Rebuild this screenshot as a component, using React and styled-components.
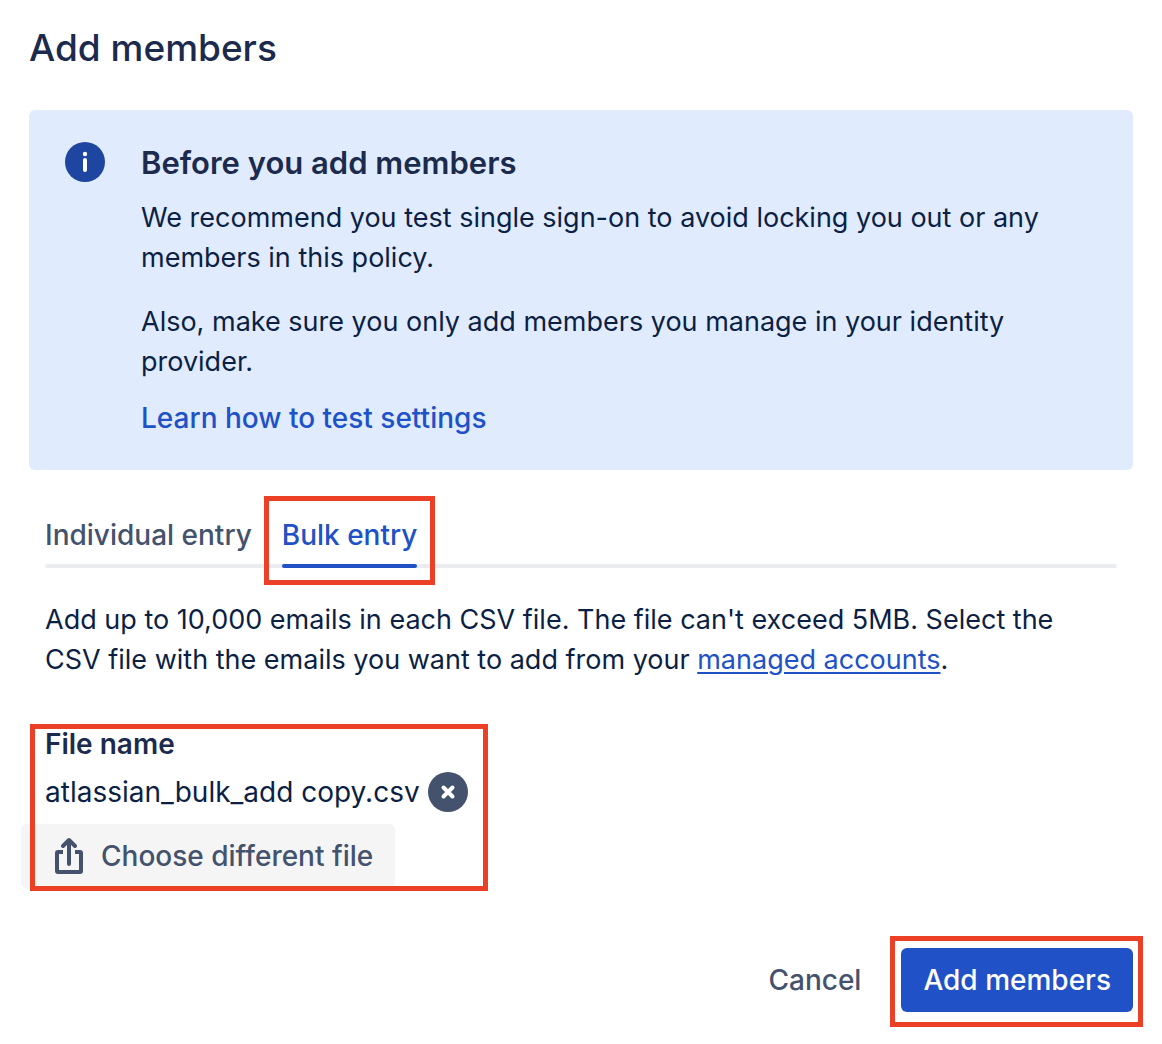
import React, { useState } from "react";
import styled, { createGlobalStyle, css } from "styled-components";

const color = {
  text: "#0c1f44",
  heading: "#1c2b4d",
  subtle: "#44526e",
  blue: "#2151c6",
  info: "#1e46a0",
  panel: "#e0ebfe",
  mark: "#eb4026",
};

const Global = createGlobalStyle`
  *, *::before, *::after { box-sizing: border-box; }
  body { margin: 0; background: #fff; }
  button { font: inherit; border: 0; cursor: pointer; }
  h1, h2, p { margin: 0; }
`;

const Dialog = styled.main`
  padding: 24px 29px 32px;
  font: 400 28px/40px Inter, "Liberation Sans", sans-serif;
  color: ${color.text};
`;

const Title = styled.h1`
  font-size: 37px;
  line-height: 48px;
  font-weight: 500;
  color: ${color.heading};
`;

const Message = styled.section`
  display: flex;
  gap: 36px;
  margin-top: 38px;
  padding: 32px 36px;
  border-radius: 6px;
  background: ${color.panel};
`;

const InfoIcon = styled.svg`
  flex: none;
  width: 40px;
  height: 40px;
`;

const MessageBody = styled.div`
  display: flex;
  flex-direction: column;
  align-items: flex-start;
`;

const MessageTitle = styled.h2`
  margin-bottom: 14px;
  font-size: 31px;
  line-height: 42px;
  font-weight: 600;
  color: ${color.heading};
`;

const Paragraph = styled.p`
  font-size: 27px;
  & + & { margin-top: 24px; }
`;

const Hint = styled(Paragraph)`
  padding-right: 16px;
`;

const Link = styled.a`
  color: ${color.blue};
  text-decoration: underline;
  text-decoration-thickness: 2px;
  text-underline-offset: 3px;
`;

const MessageLink = styled(Link)`
  margin-top: 16px;
  font-weight: 500;
  text-decoration: none;
`;

const Content = styled.div`
  padding: 0 16px;
`;

const Tabs = styled.div`
  position: relative;
  display: flex;
  gap: 30px;
  margin: 40px 0 32px;
  &::before {
    content: "";
    position: absolute;
    inset: auto 0 0;
    height: 4px;
    border-radius: 2px;
    background: #ebecf0;
  }
`;

const Tab = styled.button`
  position: relative;
  padding: 5px 0 13px;
  background: none;
  font-weight: 500;
  color: ${(p) => (p.$active ? color.blue : color.subtle)};
  ${(p) => p.$active && css`
    &::before {
      content: "";
      position: absolute;
      inset: -14px -18px -17px;
      border: 5px solid ${color.mark};
    }
    &::after {
      content: "";
      position: absolute;
      inset: auto 0 0;
      height: 4px;
      border-radius: 2px;
      background: ${color.blue};
    }
  `}
`;

const FileArea = styled.section`
  position: relative;
  width: fit-content;
  margin: 44px 0 0 -24px;
  padding: 0 20px 3px 24px;
  &::after {
    content: "";
    position: absolute;
    inset: 0 0 0 9px;
    border: 5px solid ${color.mark};
    pointer-events: none;
  }
`;

const FileLabel = styled.h2`
  font-size: 28px;
  line-height: 40px;
  font-weight: 600;
  color: ${color.heading};
`;

const FileRow = styled.div`
  display: flex;
  align-items: center;
  gap: 8px;
  margin: 8px 0 12px;
`;

const Remove = styled.button`
  display: grid;
  width: 40px;
  height: 40px;
  padding: 0;
  background: none;
`;

const Choose = styled.button`
  display: flex;
  align-items: center;
  gap: 16px;
  height: 64px;
  margin-left: -24px;
  padding: 0 22px 0 32px;
  border-radius: 6px;
  background: #f5f5f5;
  font-weight: 500;
  color: ${color.subtle};
`;

const Footer = styled.footer`
  display: flex;
  justify-content: flex-end;
  gap: 18px;
  margin-top: 57px;
`;

const Action = styled.button`
  position: relative;
  height: 64px;
  padding: 0 22px;
  border-radius: 6px;
  font-weight: 500;
  background: ${(p) => (p.$primary ? color.blue : "none")};
  color: ${(p) => (p.$primary ? "#fff" : color.subtle)};
  ${(p) => p.$primary && css`
    &::after {
      content: "";
      position: absolute;
      inset: -12px -10px -15px -11px;
      border: 5px solid ${color.mark};
    }
  `}
`;

export default function App() {
  const [tab, setTab] = useState("bulk");
  return (
    <Dialog>
      <Global />
      <Title>Add members</Title>
      <Message>
        <InfoIcon viewBox="0 0 40 40" aria-hidden="true">
          <circle cx="20" cy="20" r="20" fill={color.info} />
          <circle cx="20" cy="12" r="2.2" fill="#fff" />
          <path d="M20 18v10" stroke="#fff" strokeWidth="4" strokeLinecap="round" />
        </InfoIcon>
        <MessageBody>
          <MessageTitle>Before you add members</MessageTitle>
          <Paragraph>We recommend you test single sign-on to avoid locking you out or any members in this policy.</Paragraph>
          <Paragraph>Also, make sure you only add members you manage in your identity provider.</Paragraph>
          <MessageLink href="#test">Learn how to test settings</MessageLink>
        </MessageBody>
      </Message>
      <Content>
        <Tabs role="tablist">
          <Tab role="tab" aria-selected={tab === "single"} $active={tab === "single"} onClick={() => setTab("single")}>Individual entry</Tab>
          <Tab role="tab" aria-selected={tab === "bulk"} $active={tab === "bulk"} onClick={() => setTab("bulk")}>Bulk entry</Tab>
        </Tabs>
        <Hint>
          Add up to 10,000 emails in each CSV file. The file can't exceed 5MB. Select the CSV file with the emails you want to add from your <Link href="#accounts">managed accounts</Link>.
        </Hint>
        <FileArea>
          <FileLabel>File name</FileLabel>
          <FileRow>
            <span>atlassian_bulk_add copy.csv</span>
            <Remove aria-label="Remove file">
              <svg width="40" height="40" viewBox="0 0 40 40" aria-hidden="true">
                <circle cx="20" cy="20" r="20" fill={color.subtle} />
                <path d="M15.5 15.5l9 9m0-9l-9 9" stroke="#fff" strokeWidth="4" strokeLinecap="round" />
              </svg>
            </Remove>
          </FileRow>
          <Choose>
            <svg width="32" height="40" viewBox="0 0 32 40" fill="none" stroke="currentColor" strokeWidth="4" strokeLinecap="round" strokeLinejoin="round" aria-hidden="true">
              <path strokeLinecap="butt" d="M10 16H5a1 1 0 0 0-1 1v18a1 1 0 0 0 1 1h22a1 1 0 0 0 1-1V17a1 1 0 0 0-1-1h-5" />
              <path d="M16 28V5M10 10l6-6 6 6" />
            </svg>
            Choose different file
          </Choose>
        </FileArea>
      </Content>
      <Footer>
        <Action>Cancel</Action>
        <Action $primary>Add members</Action>
      </Footer>
    </Dialog>
  );
}
